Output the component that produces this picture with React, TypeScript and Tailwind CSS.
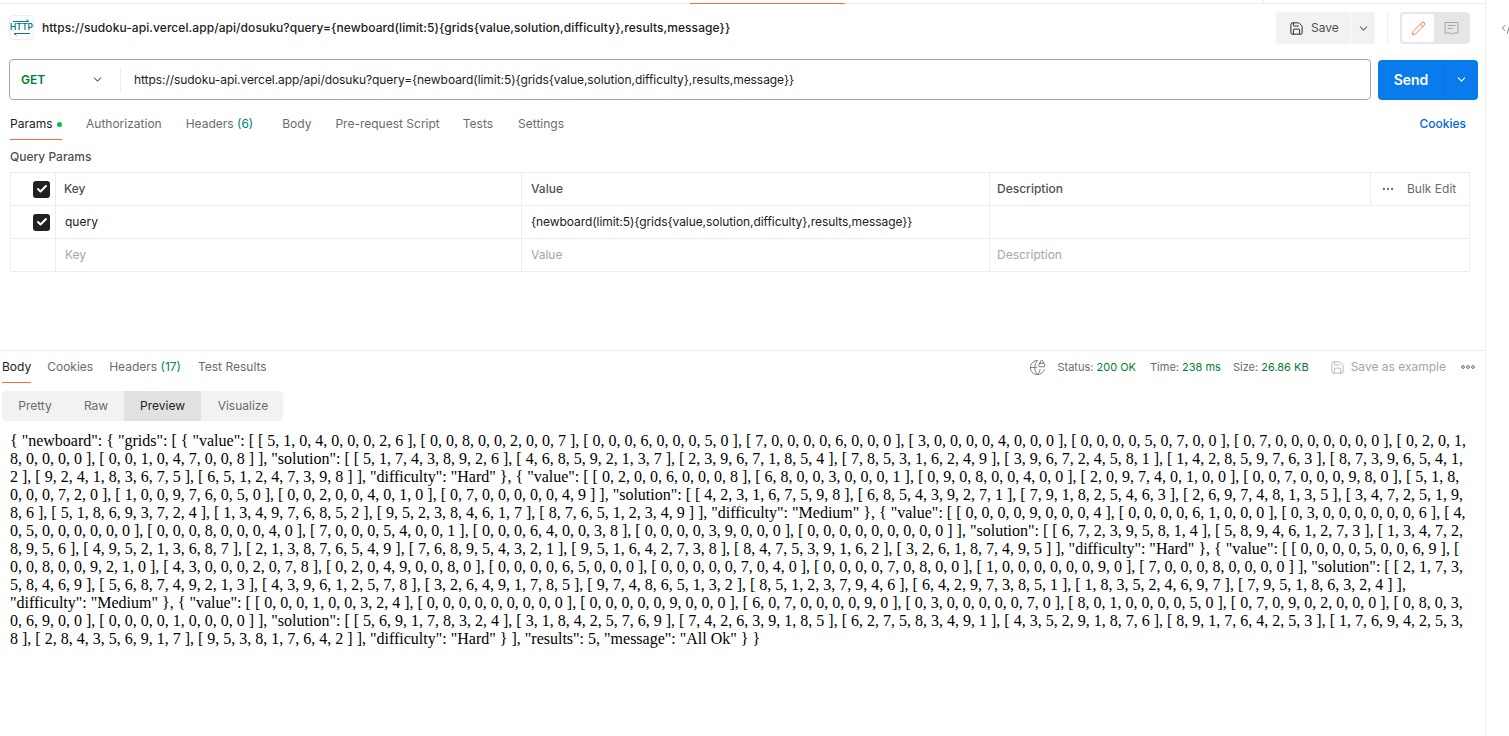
import React from 'react';
import { Save, ChevronDown, Pencil, GlobeLock, Check, Ellipsis, CodeXml } from 'lucide-react';

// the preview wraps at these points in the reference
const previewLines = [
  '{ "newboard": { "grids": [ { "value": [ [ 5, 1, 0, 4, 0, 0, 0, 2, 6 ], [ 0, 0, 8, 0, 0, 2, 0, 0, 7 ], [ 0, 0, 0, 6, 0, 0, 0, 5, 0 ], [ 7, 0, 0, 0, 0, 6, 0, 0, 0 ], [ 3, 0, 0, 0, 0, 4, 0, 0, 0 ], [ 0, 0, 0, 0, 5, 0, 7, 0, 0 ], [ 0, 7, 0, 0, 0, 0, 0, 0, 0 ], [ 0, 2, 0, 1,',
  '8, 0, 0, 0, 0 ], [ 0, 0, 1, 0, 4, 7, 0, 0, 8 ] ], "solution": [ [ 5, 1, 7, 4, 3, 8, 9, 2, 6 ], [ 4, 6, 8, 5, 9, 2, 1, 3, 7 ], [ 2, 3, 9, 6, 7, 1, 8, 5, 4 ], [ 7, 8, 5, 3, 1, 6, 2, 4, 9 ], [ 3, 9, 6, 7, 2, 4, 5, 8, 1 ], [ 1, 4, 2, 8, 5, 9, 7, 6, 3 ], [ 8, 7, 3, 9, 6, 5, 4, 1,',
  '2 ], [ 9, 2, 4, 1, 8, 3, 6, 7, 5 ], [ 6, 5, 1, 2, 4, 7, 3, 9, 8 ] ], "difficulty": "Hard" }, { "value": [ [ 0, 2, 0, 0, 6, 0, 0, 0, 8 ], [ 6, 8, 0, 0, 3, 0, 0, 0, 1 ], [ 0, 9, 0, 8, 0, 0, 4, 0, 0 ], [ 2, 0, 9, 7, 4, 0, 1, 0, 0 ], [ 0, 0, 7, 0, 0, 0, 9, 8, 0 ], [ 5, 1, 8,',
  '0, 0, 0, 7, 2, 0 ], [ 1, 0, 0, 9, 7, 6, 0, 5, 0 ], [ 0, 0, 2, 0, 0, 4, 0, 1, 0 ], [ 0, 7, 0, 0, 0, 0, 0, 4, 9 ] ], "solution": [ [ 4, 2, 3, 1, 6, 7, 5, 9, 8 ], [ 6, 8, 5, 4, 3, 9, 2, 7, 1 ], [ 7, 9, 1, 8, 2, 5, 4, 6, 3 ], [ 2, 6, 9, 7, 4, 8, 1, 3, 5 ], [ 3, 4, 7, 2, 5, 1, 9,',
  '8, 6 ], [ 5, 1, 8, 6, 9, 3, 7, 2, 4 ], [ 1, 3, 4, 9, 7, 6, 8, 5, 2 ], [ 9, 5, 2, 3, 8, 4, 6, 1, 7 ], [ 8, 7, 6, 5, 1, 2, 3, 4, 9 ] ], "difficulty": "Medium" }, { "value": [ [ 0, 0, 0, 0, 9, 0, 0, 0, 4 ], [ 0, 0, 0, 0, 6, 1, 0, 0, 0 ], [ 0, 3, 0, 0, 0, 0, 0, 0, 6 ], [ 4,',
  '0, 5, 0, 0, 0, 0, 0, 0 ], [ 0, 0, 0, 8, 0, 0, 0, 4, 0 ], [ 7, 0, 0, 0, 5, 4, 0, 0, 1 ], [ 0, 0, 0, 6, 4, 0, 0, 3, 8 ], [ 0, 0, 0, 0, 3, 9, 0, 0, 0 ], [ 0, 0, 0, 0, 0, 0, 0, 0, 0 ] ], "solution": [ [ 6, 7, 2, 3, 9, 5, 8, 1, 4 ], [ 5, 8, 9, 4, 6, 1, 2, 7, 3 ], [ 1, 3, 4, 7, 2,',
  '8, 9, 5, 6 ], [ 4, 9, 5, 2, 1, 3, 6, 8, 7 ], [ 2, 1, 3, 8, 7, 6, 5, 4, 9 ], [ 7, 6, 8, 9, 5, 4, 3, 2, 1 ], [ 9, 5, 1, 6, 4, 2, 7, 3, 8 ], [ 8, 4, 7, 5, 3, 9, 1, 6, 2 ], [ 3, 2, 6, 1, 8, 7, 4, 9, 5 ] ], "difficulty": "Hard" }, { "value": [ [ 0, 0, 0, 0, 5, 0, 0, 6, 9 ], [',
  '0, 0, 8, 0, 0, 9, 2, 1, 0 ], [ 4, 3, 0, 0, 0, 2, 0, 7, 8 ], [ 0, 2, 0, 4, 9, 0, 0, 8, 0 ], [ 0, 0, 0, 0, 6, 5, 0, 0, 0 ], [ 0, 0, 0, 0, 0, 7, 0, 4, 0 ], [ 0, 0, 0, 0, 7, 0, 8, 0, 0 ], [ 1, 0, 0, 0, 0, 0, 0, 9, 0 ], [ 7, 0, 0, 0, 8, 0, 0, 0, 0 ] ], "solution": [ [ 2, 1, 7, 3,',
  '5, 8, 4, 6, 9 ], [ 5, 6, 8, 7, 4, 9, 2, 1, 3 ], [ 4, 3, 9, 6, 1, 2, 5, 7, 8 ], [ 3, 2, 6, 4, 9, 1, 7, 8, 5 ], [ 9, 7, 4, 8, 6, 5, 1, 3, 2 ], [ 8, 5, 1, 2, 3, 7, 9, 4, 6 ], [ 6, 4, 2, 9, 7, 3, 8, 5, 1 ], [ 1, 8, 3, 5, 2, 4, 6, 9, 7 ], [ 7, 9, 5, 1, 8, 6, 3, 2, 4 ] ],',
  '"difficulty": "Medium" }, { "value": [ [ 0, 0, 0, 1, 0, 0, 3, 2, 4 ], [ 0, 0, 0, 0, 0, 0, 0, 0, 0 ], [ 0, 0, 0, 0, 0, 9, 0, 0, 0 ], [ 6, 0, 7, 0, 0, 0, 0, 9, 0 ], [ 0, 3, 0, 0, 0, 0, 0, 7, 0 ], [ 8, 0, 1, 0, 0, 0, 0, 5, 0 ], [ 0, 7, 0, 9, 0, 2, 0, 0, 0 ], [ 0, 8, 0, 3,',
  '0, 6, 9, 0, 0 ], [ 0, 0, 0, 0, 1, 0, 0, 0, 0 ] ], "solution": [ [ 5, 6, 9, 1, 7, 8, 3, 2, 4 ], [ 3, 1, 8, 4, 2, 5, 7, 6, 9 ], [ 7, 4, 2, 6, 3, 9, 1, 8, 5 ], [ 6, 2, 7, 5, 8, 3, 4, 9, 1 ], [ 4, 3, 5, 2, 9, 1, 8, 7, 6 ], [ 8, 9, 1, 7, 6, 4, 2, 5, 3 ], [ 1, 7, 6, 9, 4, 2, 5, 3,',
  '8 ], [ 2, 8, 4, 3, 5, 6, 9, 1, 7 ], [ 9, 5, 3, 8, 1, 7, 6, 4, 2 ] ], "difficulty": "Hard" } ], "results": 5, "message": "All Ok" } }',
];

const url = 'https://sudoku-api.vercel.app/api/dosuku?query={newboard(limit:5){grids{value,solution,difficulty},results,message}}';
const tableCols = 'grid grid-cols-[44px_466px_468px_381px_99px]';

function Checkbox() {
  return (
    <div className="w-[17px] h-[17px] rounded-[3px] bg-[#212121] flex items-center justify-center">
      <Check size={12} strokeWidth={4} className="text-white" />
    </div>
  );
}

function HttpIcon() {
  return (
    <div className="w-[25px] h-[25px] rounded-[4px] border border-[#ededed] flex flex-col items-center justify-center text-[#097b8f]">
      <svg width="17" height="4" viewBox="0 0 17 4" fill="none" stroke="currentColor">
        <path d="M0 2.5h16M13.5 .5l2.5 2" />
      </svg>
      <span className="text-[8.5px] leading-[9px] font-semibold">HTTP</span>
      <svg width="17" height="4" viewBox="0 0 17 4" fill="none" stroke="currentColor">
        <path d="M1 1.5h16M3.5 3.5l-2.5-2" />
      </svg>
    </div>
  );
}

function Tab({ label, count, active, dot, className }: { label: string; count?: string; active?: boolean; dot?: boolean; className: string }) {
  return (
    <div className={`relative h-full flex items-center gap-1 ${active ? 'text-[#212121]' : 'text-[#6b6b6b]'} ${className}`}>
      <span>
        {label}
        {count && <span className="text-[#007f6e]"> {count}</span>}
      </span>
      {dot && <span className="w-[5px] h-[5px] rounded-full bg-[#0cbb52]" />}
      {active && <span className="absolute left-0 right-0 bottom-0 h-px bg-[#ff6c37]" />}
    </div>
  );
}

export default function App() {
  return (
    <div className="w-[1509px] h-[736px] overflow-hidden bg-white flex font-['Inter',sans-serif] text-[12px] text-[#212121]">
      <div className="w-[1486px] shrink-0 border-r border-[#ededed] flex flex-col">
        {/* top tab strip */}
        <div className="relative h-[4px] shrink-0 border-b border-[#ededed]">
          <div className="absolute left-[690px] bottom-[-1px] w-[155px] h-px bg-[#ff6c37]" />
          <div className="absolute left-[1263px] top-0 w-px h-[3px] bg-[#ededed]" />
        </div>

        {/* request title + save */}
        <div className="h-[55px] shrink-0 pt-[8px] pl-[9px] pr-[15px] flex items-start">
          <div className="mt-[3px]">
            <HttpIcon />
          </div>
          <div className="ml-[8px] mt-[8px] font-medium leading-[16px] text-[12px] tracking-[0.07px]">{url}</div>
          <div className="ml-auto flex items-center">
            <div className="w-[74px] h-[32px] rounded-l-[4px] bg-[#f2f2f2] flex items-center pl-[13px] gap-[7px] text-[#505050]">
              <Save size={15} className="text-[#212121]" strokeWidth={1.5} />
              <span>Save</span>
            </div>
            <div className="ml-px w-[24px] h-[32px] rounded-r-[4px] bg-[#f2f2f2] flex items-center justify-center">
              <ChevronDown size={13} className="text-[#6b6b6b]" />
            </div>
            <div className="mx-[12px] w-px h-[32px] bg-[#ededed]" />
            <div className="w-[70px] h-[32px] rounded-[4px] bg-[#e6e6e6] flex items-center p-[2px]">
              <div className="w-[32px] h-[28px] rounded-[3px] bg-white flex items-center justify-center">
                <Pencil size={15} strokeWidth={1.4} className="text-[#ff6c37]" />
              </div>
              <div className="w-[34px] flex items-center justify-center">
                <svg width="15" height="15" viewBox="0 0 15 15" fill="none" stroke="#a6a6a6">
                  <path d="M1 1.5h13v10.5H9l-1.5 1.5L6 12H1zM3.5 4.5h8M3.5 7.5h5" />
                </svg>
              </div>
            </div>
          </div>
        </div>

        {/* url bar */}
        <div className="h-[41px] shrink-0 pl-[9px] flex items-center">
          <div className="w-[1362px] h-[41px] rounded-[4px] border border-[#a6a6a6] flex items-center">
            <div className="w-[111px] h-[24px] border-r border-[#ededed] flex items-center pl-[11px] pr-[16px] justify-between">
              <span className="font-semibold text-[#007f31]">GET</span>
              <ChevronDown size={13} className="text-[#6b6b6b]" />
            </div>
            <div className="pl-[13px] text-[#212121] tracking-[-0.06px]">{url}</div>
          </div>
          <div className="ml-[7px] w-[100px] h-[40px] rounded-[4px] bg-[#097bed] flex items-center text-white">
            <div className="w-[67px] h-full border-r border-[#0b72dc] flex items-center justify-center text-[14px] font-semibold">Send</div>
            <div className="flex-1 flex items-center justify-center">
              <ChevronDown size={13} />
            </div>
          </div>
        </div>

        {/* request tabs */}
        <div className="h-[40px] shrink-0 pl-[10px] pr-[19px] flex items-stretch">
          <div className="w-full h-[40px] flex items-center">
            <Tab label="Params" active dot className="w-[52px] pt-[8px]" />
            <Tab label="Authorization" className="ml-[24px] pt-[8px]" />
            <Tab label="Headers" count="(6)" className="ml-[24px] pt-[8px]" />
            <Tab label="Body" className="ml-[29px] pt-[8px]" />
            <Tab label="Pre-request Script" className="ml-[24px] pt-[8px]" />
            <Tab label="Tests" className="ml-[23px] pt-[8px]" />
            <Tab label="Settings" className="ml-[25px] pt-[8px]" />
            <div className="ml-auto pt-[8px] font-medium text-[#0265d2]">Cookies</div>
          </div>
        </div>

        <div className="mt-[9px] pl-[10px] h-[16px] leading-[16px] font-medium text-[#505050]">Query Params</div>

        {/* params table */}
        <div className="mt-[7px] ml-[10px] w-[1460px] border border-[#ededed]">
          <div className={`${tableCols} h-[33px] border-b border-[#ededed] font-medium text-[#505050]`}>
            <div className="flex items-center justify-center pl-[17px]">
              <Checkbox />
            </div>
            <div className="border-l border-[#ededed] pl-[8px] flex items-center">Key</div>
            <div className="border-l border-[#ededed] pl-[9px] flex items-center">Value</div>
            <div className="border-l border-[#ededed] pl-[7px] flex items-center">Description</div>
            <div className="border-l border-[#ededed] pl-[10px] flex items-center gap-[12px] font-normal text-[#6b6b6b]">
              <Ellipsis size={14} />
              <span>Bulk Edit</span>
            </div>
          </div>
          <div className={`${tableCols} h-[33px] border-b border-[#ededed]`}>
            <div className="flex items-center justify-center pl-[17px]">
              <Checkbox />
            </div>
            <div className="border-l border-[#ededed] pl-[9px] flex items-center">query</div>
            <div className="border-l border-[#ededed] pl-[9px] flex items-center tracking-[-0.07px]">{'{newboard(limit:5){grids{value,solution,difficulty},results,message}}'}</div>
            <div className="border-l border-[#ededed]" />
            <div />
          </div>
          <div className={`${tableCols} h-[32px] text-[#a6a6a6]`}>
            <div />
            <div className="border-l border-[#ededed] pl-[9px] flex items-center">Key</div>
            <div className="border-l border-[#ededed] pl-[9px] flex items-center">Value</div>
            <div className="border-l border-[#ededed] pl-[7px] flex items-center">Description</div>
            <div />
          </div>
        </div>

        {/* response */}
        <div className="mt-[78px] border-t border-[#ededed] flex-1 min-h-0">
          <div className="h-[32px] pl-[2px] pr-[10px] flex items-center">
            <Tab label="Body" active className="" />
            <Tab label="Cookies" className="ml-[16px]" />
            <Tab label="Headers" count="(17)" className="ml-[16px]" />
            <Tab label="Test Results" className="ml-[17px]" />
            <div className="ml-auto flex items-center text-[#6b6b6b] text-[11px]">
              <GlobeLock size={17} strokeWidth={1.2} className="mr-[11px]" />
              <span>Status: <span className="text-[#007f31]">200 OK</span></span>
              <span className="ml-[14px]">Time: <span className="text-[#007f31]">238 ms</span></span>
              <span className="ml-[12px]">Size: <span className="text-[#007f31]">26.86 KB</span></span>
              <Save size={15} strokeWidth={1.2} className="ml-[21px] text-[#a6a6a6]" />
              <span className="ml-[6px] text-[12px] text-[#a6a6a6]">Save as example</span>
              <svg className="ml-[15px]" width="14" height="4" viewBox="0 0 14 4" fill="none" stroke="#6b6b6b">
                <circle cx="2" cy="2" r="1.4" />
                <circle cx="7" cy="2" r="1.4" />
                <circle cx="12" cy="2" r="1.4" />
              </svg>
            </div>
          </div>

          <div className="mt-[8px] ml-[2px] w-[281px] h-[30px] rounded-[4px] bg-[#f2f2f2] flex text-[#6b6b6b] overflow-hidden">
            <div className="w-[62px] flex items-center justify-center pl-[4px]">Pretty</div>
            <div className="w-[60px] flex items-center justify-center pl-[4px]">Raw</div>
            <div className="w-[77px] flex items-center justify-center bg-[#e1e1e1] text-[#212121]">Preview</div>
            <div className="w-[82px] flex items-center justify-center pl-[2px]">Visualize</div>
          </div>

          <div className="mt-[11px] pl-[10px] font-['Liberation_Serif',serif] text-[16px] leading-[18px] text-black whitespace-nowrap">
            {previewLines.map((line, i) => (
              <div key={i}>{line}</div>
            ))}
          </div>
        </div>
      </div>

      {/* right rail */}
      <div className="flex-1 overflow-hidden pt-[20px] pl-[15px]">
        <CodeXml size={16} strokeWidth={1.3} className="text-[#6b6b6b]" />
      </div>
    </div>
  );
}
